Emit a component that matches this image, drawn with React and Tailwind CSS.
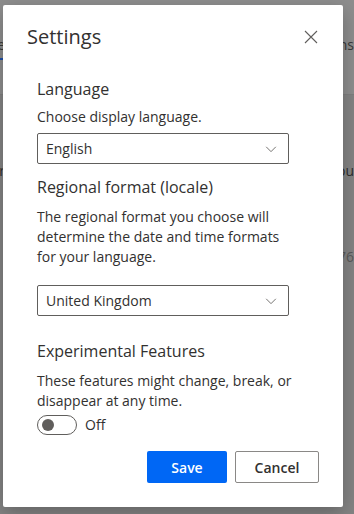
import { useState } from "react";

const Chevron = () => (
  <svg width="14" height="14" viewBox="0 0 16 16" fill="none" className="text-[#605e5c]">
    <path d="M2.5 5.5 8 11l5.5-5.5" stroke="currentColor" strokeWidth="1" />
  </svg>
);

const Dropdown = ({ value }) => (
  <div className="flex items-center justify-between w-[252px] h-[31px] border border-[#605e5c] rounded-[2px] pl-[8px] pr-[10px] bg-white">
    <span className="text-[14px] text-[#323130]">{value}</span>
    <Chevron />
  </div>
);

export default function App() {
  const [enabled, setEnabled] = useState(false);

  return (
    <div
      className="relative w-[354px] h-[514px] overflow-hidden bg-[#858585]"
      style={{ fontFamily: '"Open Sans", "Noto Sans", sans-serif' }}
    >
      {/* page behind the overlay */}
      <div className="absolute inset-0 flex flex-col">
        <div className="h-[95px] bg-[#8e8e8e] border-b border-[#7f7f7f]" />
        <div className="flex-1 bg-[#848484]" />
      </div>
      <span className="absolute right-[349px] top-[34px] text-[14px] text-[#3a3a3a]">Home</span>
      <div className="absolute left-0 top-[58px] w-[3px] h-[2px] bg-[#1f4fa8]" />
      <span className="absolute right-[0px] top-[34px] text-[14px] text-[#3a3a3a]">Questions</span>
      <span className="absolute right-[0px] top-[160px] text-[14px] text-[#2e2e2e]">About you</span>
      <span className="absolute right-[0px] top-[246px] text-[14px] text-[#5a5a5a]">1.276</span>
      <span className="absolute right-[349px] top-[160px] text-[14px] text-[#2e2e2e]">Order</span>

      {/* dialog */}
      <div className="absolute left-[3px] top-[5px] w-[340px] h-[502px] bg-white rounded-[2px] shadow-[0_6px_20px_rgba(0,0,0,0.25)] flex flex-col">
        <div className="flex items-center justify-between pl-[24px] pr-[25px] pt-[18px]">
          <h1 className="text-[20px] font-medium text-[#323130] leading-[28px]">Settings</h1>
          <svg width="14" height="14" viewBox="0 0 14 14" className="text-[#605e5c]">
            <path d="M1 1l12 12M13 1 1 13" stroke="currentColor" strokeWidth="1.1" />
          </svg>
        </div>

        <div className="flex flex-col pl-[34px] pr-[24px] text-[#323130]">
          <h2 className="mt-[27px] text-[16px] font-medium leading-[22px]">Language</h2>
          <p className="mt-[7px] text-[14px] leading-[20px]">Choose display language.</p>
          <div className="mt-[6px]">
            <Dropdown value="English" />
          </div>

          <h2 className="mt-[12px] text-[16px] font-medium leading-[22px]">Regional format (locale)</h2>
          <p className="mt-[9px] text-[14px] leading-[20px] w-[260px]">
            The regional format you choose will determine the date and time formats for your language.
          </p>
          <div className="mt-[18px]">
            <Dropdown value="United Kingdom" />
          </div>

          <h2 className="mt-[24px] text-[16px] font-medium leading-[22px]">Experimental Features</h2>
          <p className="mt-[9px] text-[14px] leading-[20px] w-[260px]">
            These features might change, break, or disappear at any time.
          </p>
          <div className="mt-[3px] flex items-center gap-[8px]">
            <button
              onClick={() => setEnabled(!enabled)}
              className={`w-[40px] h-[20px] rounded-full border flex items-center px-[4px] ${
                enabled ? "bg-[#0067f5] border-[#0067f5] justify-end" : "bg-white border-[#605e5c] justify-start"
              }`}
            >
              <span className={`w-[12px] h-[12px] rounded-full ${enabled ? "bg-white" : "bg-[#605e5c]"}`} />
            </button>
            <span className="text-[14px]">{enabled ? "On" : "Off"}</span>
          </div>
        </div>

        <div className="flex justify-end gap-[8px] pr-[24px] mt-[16px]">
          <button className="w-[80px] h-[32px] rounded-[2px] bg-[#0067f5] text-white text-[14px] font-semibold">
            Save
          </button>
          <button className="w-[84px] h-[32px] rounded-[2px] border border-[#8a8886] bg-white text-[#323130] text-[14px] font-semibold">
            Cancel
          </button>
        </div>
      </div>
    </div>
  );
}
